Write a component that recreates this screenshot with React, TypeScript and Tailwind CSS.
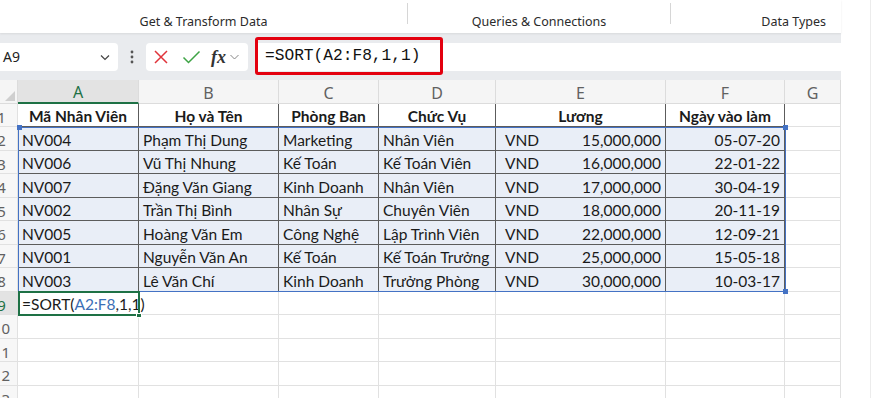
import React from "react";

const COLS = [
  { key: "A", w: 121 },
  { key: "B", w: 140 },
  { key: "C", w: 100 },
  { key: "D", w: 117 },
  { key: "E", w: 170 },
  { key: "F", w: 119 },
  { key: "G", w: 56 },
];

interface Row {
  id: string;
  name: string;
  dept: string;
  role: string;
  salary: string;
  date: string;
}

const rows: Row[] = [
  { id: "NV004", name: "Phạm Thị Dung", dept: "Marketing", role: "Nhân Viên", salary: "15,000,000", date: "05-07-20" },
  { id: "NV006", name: "Vũ Thị Nhung", dept: "Kế Toán", role: "Kế Toán Viên", salary: "16,000,000", date: "22-01-22" },
  { id: "NV007", name: "Đặng Văn Giang", dept: "Kinh Doanh", role: "Nhân Viên", salary: "17,000,000", date: "30-04-19" },
  { id: "NV002", name: "Trần Thị Bình", dept: "Nhân Sự", role: "Chuyên Viên", salary: "18,000,000", date: "20-11-19" },
  { id: "NV005", name: "Hoàng Văn Em", dept: "Công Nghệ", role: "Lập Trình Viên", salary: "22,000,000", date: "12-09-21" },
  { id: "NV001", name: "Nguyễn Văn An", dept: "Kế Toán", role: "Kế Toán Trưởng", salary: "25,000,000", date: "15-05-18" },
  { id: "NV003", name: "Lê Văn Chí", dept: "Kinh Doanh", role: "Trưởng Phòng", salary: "30,000,000", date: "10-03-17" },
];

const cellFont = { fontFamily: "Lato, 'Noto Sans', sans-serif" };

function RowHead({ n, active }: { n: number; active?: boolean }) {
  return (
    <div
      className={`w-[18px] shrink-0 overflow-hidden border-r border-b border-[#e1e1e1] ${
        active ? "bg-[#e3e3e3] text-[#1e7145]" : "bg-[#f7f7f7] text-[#616161]"
      }`}
    >
      <div
        className="-ml-[15px] w-[33px] pt-[2px] text-center text-[15px] leading-[23px]"
        style={{ fontFamily: "'Noto Sans', sans-serif" }}
      >
        {n}
      </div>
    </div>
  );
}

function Cell({
  w,
  dark,
  fill,
  align = "left",
  bold,
  clip = true,
  children,
}: {
  w: number;
  dark?: boolean;
  fill?: boolean;
  align?: "left" | "center" | "right";
  bold?: boolean;
  clip?: boolean;
  children?: React.ReactNode;
}) {
  const a = align === "center" ? "justify-center" : align === "right" ? "justify-end" : "justify-start";
  return (
    <div
      className={`shrink-0 h-full flex items-center pt-[4px] px-[4px] whitespace-nowrap text-[15.5px] text-[#1a1a1a] border-r border-b ${a} ${
        clip ? "overflow-hidden" : "overflow-visible relative z-10"
      } ${dark ? "border-[#5c5c5c]" : "border-[#e1e1e1]"} ${fill ? "bg-[#e9eef7]" : "bg-white"} ${
        bold ? "font-bold" : ""
      }`}
      style={{ width: w, ...cellFont }}
    >
      {children}
    </div>
  );
}

function EmptyRow({ n, children }: { n: number; children?: React.ReactNode }) {
  return (
    <div className="flex h-[23.5px]">
      <RowHead n={n} active={n === 9} />
      {children ?? COLS.map((c) => <Cell key={c.key} w={c.w} />)}
    </div>
  );
}

export default function App() {
  return (
    <div className="relative flex w-[874px] h-[398px] overflow-hidden bg-white">
      <div className="flex flex-col w-[841px] shrink-0">
        {/* ribbon group labels */}
        <div
          className="flex h-[33px] shrink-0 items-center text-[12.5px] text-[#2b2b2b] bg-white shadow-[0_1px_2px_rgba(0,0,0,0.08)] z-10"
          style={{ fontFamily: "'Noto Sans', sans-serif" }}
        >
          <div className="w-[407px] text-center pt-[11px]">Get &amp; Transform Data</div>
          <div className="w-px h-[21px] bg-[#d6d6d6] -mt-[6px]" />
          <div className="w-[262px] text-center pt-[11px]">Queries &amp; Connections</div>
          <div className="w-px h-[21px] bg-[#d6d6d6] -mt-[6px]" />
          <div className="flex-1 text-right pr-[15px] pt-[11px]">Data Types</div>
        </div>

        {/* formula bar */}
        <div className="relative flex h-[47px] shrink-0 items-center bg-[#e9ebee]">
          <div className="flex items-center justify-between w-[118px] h-[28px] bg-white rounded-r-[4px] pl-[3px] pr-[6px]">
            <span className="text-[14px] text-[#222]" style={{ fontFamily: "'Noto Sans', sans-serif" }}>
              A9
            </span>
            <svg width="12" height="12" viewBox="0 0 12 12" className="mr-[1px]">
              <path d="M2 4.5 L6 8.5 L10 4.5" fill="none" stroke="#444" strokeWidth="1.2" />
            </svg>
          </div>
          <div className="w-[28px] flex justify-center">
            <svg width="4" height="14" viewBox="0 0 4 14">
              <circle cx="2" cy="2" r="1.4" fill="#555" />
              <circle cx="2" cy="7" r="1.4" fill="#555" />
              <circle cx="2" cy="12" r="1.4" fill="#555" />
            </svg>
          </div>
          <div className="flex items-center w-[102px] h-[28px] bg-white rounded-[4px] pl-[7px]">
            <svg width="16" height="16" viewBox="0 0 16 16">
              <path d="M2 2 L14 14 M14 2 L2 14" stroke="#e0343b" strokeWidth="1.5" />
            </svg>
            <svg width="19" height="16" viewBox="0 0 19 16" className="ml-[13px]">
              <path d="M1.5 8.5 L6.5 13.5 L17.5 2.5" fill="none" stroke="#3ea345" strokeWidth="1.5" />
            </svg>
            <span
              className="ml-[10px] text-[18px] italic font-bold text-[#333] leading-none"
              style={{ fontFamily: "'Liberation Serif', serif" }}
            >
              fx
            </span>
            <svg width="11" height="10" viewBox="0 0 11 10" className="ml-[3px]">
              <path d="M1.5 3 L5.5 7 L9.5 3" fill="none" stroke="#888" strokeWidth="1" />
            </svg>
          </div>
          <div className="flex-1 h-[28px] bg-white ml-[7px] flex items-center pl-[10px]">
            <span className="text-[16.2px] text-[#111]" style={{ fontFamily: "'Liberation Mono', monospace" }}>
              =SORT(A2:F8,1,1)
            </span>
          </div>
          <div className="absolute left-[255px] top-[4px] w-[188px] h-[38px] border-[3px] border-[#e3000f] rounded-[3px]" />
        </div>

        {/* sheet */}
        <div className="relative flex-1 overflow-hidden">
          {/* column headers */}
          <div
            className="flex h-[23.5px] bg-[#f5f5f5] text-[16px] text-[#616161]"
            style={{ fontFamily: "'Noto Sans', sans-serif" }}
          >
            <div className="relative w-[18px] shrink-0 border-r border-b border-[#dcdcdc]">
              <svg width="10" height="10" viewBox="0 0 10 10" className="absolute right-[2px] bottom-[2px]">
                <path d="M10 0 L10 10 L0 10 Z" fill="#cfcfcf" />
              </svg>
            </div>
            {COLS.map((c) => (
              <div
                key={c.key}
                className={`shrink-0 flex items-center justify-center pt-[3px] border-r ${
                  c.key === "A"
                    ? "bg-[#e3e3e3] text-[#1e7145] border-b-2 border-b-[#1e7145] border-r-[#dcdcdc]"
                    : "border-b border-[#dcdcdc]"
                }`}
                style={{ width: c.w }}
              >
                {c.key}
              </div>
            ))}
          </div>

          {/* row 1 headers */}
          <EmptyRow n={1}>
            <Cell w={121} dark bold align="center">Mã Nhân Viên</Cell>
            <Cell w={140} dark bold align="center">Họ và Tên</Cell>
            <Cell w={100} dark bold align="center">Phòng Ban</Cell>
            <Cell w={117} dark bold align="center">Chức Vụ</Cell>
            <Cell w={170} dark bold align="center">Lương</Cell>
            <Cell w={119} dark bold align="center">Ngày vào làm</Cell>
            <Cell w={56} />
          </EmptyRow>

          {rows.map((r, i) => (
            <EmptyRow key={r.id} n={i + 2}>
              <Cell w={121} dark fill>{r.id}</Cell>
              <Cell w={140} dark fill>{r.name}</Cell>
              <Cell w={100} dark fill>{r.dept}</Cell>
              <Cell w={117} dark fill>{r.role}</Cell>
              <Cell w={170} dark fill>
                <span className="pl-[5px]">VND</span>
                <span className="ml-auto">{r.salary}</span>
              </Cell>
              <Cell w={119} dark fill align="right">{r.date}</Cell>
              <Cell w={56} />
            </EmptyRow>
          ))}

          <EmptyRow n={9}>
            <Cell w={121} clip={false}>
              =SORT(<span className="text-[#3b6fb6]">A2:F8</span>,1,1)
            </Cell>
            {COLS.slice(1).map((c) => (
              <Cell key={c.key} w={c.w} />
            ))}
          </EmptyRow>
          <EmptyRow n={10} />
          <EmptyRow n={11} />
          <EmptyRow n={12} />
          <EmptyRow n={13} />

          {/* range highlight A2:F8 */}
          <div className="absolute left-[18px] top-[46.5px] w-[768px] h-[165.5px] border-[1.5px] border-[#4472c4] pointer-events-none z-20" />
          <div className="absolute left-[17px] top-[45px] w-[5px] h-[5px] bg-[#4472c4] z-20" />
          <div className="absolute left-[782.5px] top-[45px] w-[5px] h-[5px] bg-[#4472c4] z-20" />
          <div className="absolute left-[782.5px] top-[209px] w-[5px] h-[5px] bg-[#4472c4] z-20" />

          {/* active cell A9 */}
          <div className="absolute left-[18px] top-[211px] w-[122px] h-[25px] border-2 border-[#1e7145] pointer-events-none z-20" />
          <div className="absolute left-[136px] top-[233px] w-[6px] h-[5px] bg-[#1e7145] border border-white z-20" />
        </div>
      </div>
      <div className="flex-1 flex justify-end pr-[3px]">
        <div className="w-px h-full bg-[#ececec]" />
      </div>
    </div>
  );
}
